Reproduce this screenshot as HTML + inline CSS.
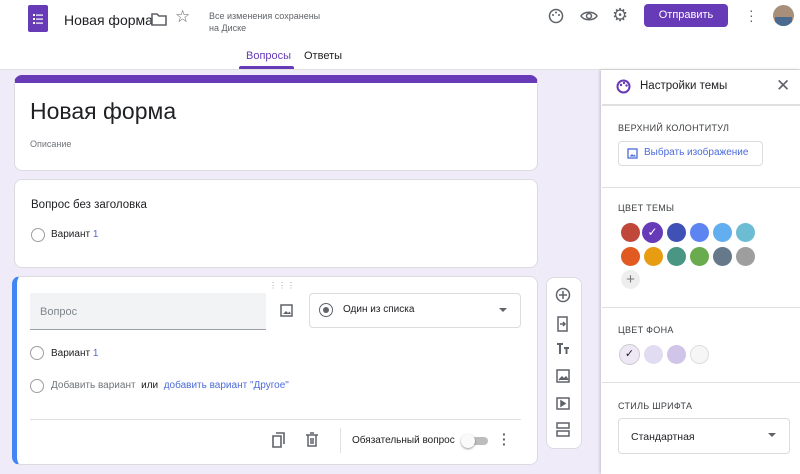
<!DOCTYPE html>
<html><head><meta charset="utf-8"><style>
*{box-sizing:border-box;margin:0;padding:0}
body{width:800px;height:474px;overflow:hidden;background:#f0ebf8;font-family:"Liberation Sans",sans-serif;position:relative;color:#202124}
.abs{position:absolute}
.hdr{left:0;top:0;width:800px;height:70px;background:#fff;border-bottom:1px solid #e0e0e0}
.card{background:#fff;border-radius:8px;border:1px solid #dadce0}
.radio{width:14px;height:14px;border:1.5px solid #9e9e9e;border-radius:50%}
.lbl{font-size:9px;color:#3c4043;letter-spacing:.3px}
.dot{width:19px;height:19px;border-radius:50%;position:absolute}
.div{left:602px;width:198px;height:1px;background:#e0e0e0}
</style></head><body>
<div class="abs hdr"></div>
<div class="abs" style="left:28px;top:5px;width:20px;height:27px;background:#673ab7;border-radius:2px"></div>
<svg class="abs" style="left:31px;top:12px" width="14" height="14"><g fill="#fff"><rect x="2" y="2" width="2" height="2"/><rect x="5" y="2.5" width="7" height="1.2"/><rect x="2" y="6" width="2" height="2"/><rect x="5" y="6.5" width="7" height="1.2"/><rect x="2" y="10" width="2" height="2"/><rect x="5" y="10.5" width="7" height="1.2"/></g></svg>
<div class="abs" style="left:64px;top:12px;font-size:14px">Новая форма</div>
<svg class="abs" style="left:151px;top:12px" width="16" height="14"><path d="M1 2h5l2 2h7v9H1z" fill="none" stroke="#5f6368" stroke-width="1.6"/></svg>
<div class="abs" style="left:175px;top:7px;font-size:17px;color:#5f6368">☆</div>
<div class="abs" style="left:209px;top:10px;font-size:9px;color:#5f6368;line-height:12px">Все изменения сохранены<br>на Диске</div>
<svg class="abs" style="left:548px;top:8px" width="16" height="16"><circle cx="8" cy="8" r="6.5" fill="none" stroke="#5f6368" stroke-width="1.5"/><circle cx="5" cy="7" r="1" fill="#5f6368"/><circle cx="8" cy="4.5" r="1" fill="#5f6368"/><circle cx="11" cy="7" r="1" fill="#5f6368"/></svg>
<svg class="abs" style="left:580px;top:9px" width="18" height="14"><path d="M1 7C4 2 14 2 17 7C14 12 4 12 1 7z" fill="none" stroke="#5f6368" stroke-width="1.5"/><circle cx="9" cy="7" r="2.5" fill="none" stroke="#5f6368" stroke-width="1.5"/></svg>
<div class="abs" style="left:612px;top:5px;font-size:18px;color:#5f6368">⚙</div>
<div class="abs" style="left:644px;top:4px;width:84px;height:23px;background:#673ab7;border-radius:4px;color:#fff;font-size:11px;text-align:center;line-height:23px">Отправить</div>
<div class="abs" style="left:749px;top:8px;font-size:14px;color:#5f6368;line-height:5px">·<br>·<br>·</div>
<div class="abs" style="left:773px;top:5px;width:21px;height:21px;border-radius:50%;background:#a88f7a;overflow:hidden"><div style="margin:12px 2px;width:17px;height:9px;background:#4a6a90"></div></div>
<div class="abs" style="left:246px;top:50px;font-size:11px;color:#673ab7">Вопросы</div>
<div class="abs" style="left:239px;top:66px;width:55px;height:3px;background:#673ab7;border-radius:2px 2px 0 0"></div>
<div class="abs" style="left:304px;top:50px;font-size:11px;color:#202124">Ответы</div>

<div class="abs card" style="left:14px;top:75px;width:524px;height:96px;border-top:8px solid #673ab7"></div>
<div class="abs" style="left:30px;top:98px;font-size:23px">Новая форма</div>
<div class="abs" style="left:30px;top:139px;font-size:9px;color:#70757a">Описание</div>

<div class="abs card" style="left:14px;top:179px;width:524px;height:89px"></div>
<div class="abs" style="left:31px;top:199px;font-size:11.5px">Вопрос без заголовка</div>
<div class="abs radio" style="left:31px;top:228px"></div>
<div class="abs" style="left:51px;top:229px;font-size:10px">Вариант <span style="color:#4c6bd8">1</span></div>

<div class="abs card" style="left:12px;top:276px;width:526px;height:189px;border-left:5px solid #4285f4"></div>
<div class="abs" style="left:269px;top:281px;font-size:8px;color:#9aa0a6;letter-spacing:1px">⋮⋮⋮</div>
<div class="abs" style="left:30px;top:293px;width:236px;height:37px;background:#f1f3f4;border-bottom:1px solid #9aa0a6;font-size:11px;color:#80868b;padding:13px 10px">Вопрос</div>
<svg class="abs" style="left:280px;top:304px" width="13" height="13"><rect x="1" y="1" width="11" height="11" fill="none" stroke="#5f6368" stroke-width="1.5"/><path d="M3 10l3-3 2 2 1.5-1.5L11 10z" fill="#5f6368"/></svg>
<div class="abs" style="left:309px;top:293px;width:212px;height:35px;border:1px solid #dadce0;border-radius:4px"></div>
<div class="abs" style="left:319px;top:303px;width:14px;height:14px;border:1.5px solid #5f6368;border-radius:50%"><div style="margin:2.5px;width:6px;height:6px;border-radius:50%;background:#5f6368"></div></div>
<div class="abs" style="left:343px;top:304px;font-size:10px">Один из списка</div>
<div class="abs" style="left:499px;top:308px;border:4px solid transparent;border-top:4px solid #5f6368"></div>
<div class="abs radio" style="left:30px;top:346px"></div>
<div class="abs" style="left:51px;top:348px;font-size:10px">Вариант <span style="color:#4c6bd8">1</span></div>
<div class="abs radio" style="left:30px;top:379px"></div>
<div class="abs" style="left:51px;top:380px;font-size:10px;color:#70757a">Добавить вариант <span style="color:#202124">&nbsp;или&nbsp;</span> <span style="color:#4c6bd8">добавить вариант "Другое"</span></div>
<div class="abs" style="left:30px;top:419px;width:491px;height:1px;background:#e0e0e0"></div>
<svg class="abs" style="left:272px;top:432px" width="16" height="16"><path d="M4 1h8v11M1 4h8v11H1z" fill="none" stroke="#5f6368" stroke-width="1.6"/></svg>
<svg class="abs" style="left:305px;top:432px" width="14" height="15"><path d="M1 3h12M5 1h4M3 3v11h8V3M6 6v6M8 6v6" fill="none" stroke="#5f6368" stroke-width="1.5"/></svg>
<div class="abs" style="left:340px;top:428px;width:1px;height:25px;background:#e0e0e0"></div>
<div class="abs" style="left:352px;top:435px;font-size:10px">Обязательный вопрос</div>
<div class="abs" style="left:464px;top:437px;width:24px;height:8px;background:#bdbdbd;border-radius:4px"></div>
<div class="abs" style="left:461px;top:434px;width:14px;height:14px;background:#fafafa;border-radius:50%;box-shadow:0 1px 2px rgba(0,0,0,.4)"></div>
<div class="abs" style="left:502px;top:432px;font-size:14px;color:#5f6368;line-height:5px;font-weight:bold">·<br>·<br>·</div>

<div class="abs card" style="left:546px;top:277px;width:36px;height:172px"></div>
<svg class="abs" style="left:555px;top:287px" width="16" height="168" fill="none" stroke="#5f6368" stroke-width="1.5">
<circle cx="8" cy="8" r="6.5"/><path d="M8 4v8M4 8h8"/>
<path d="M3 30h9l0 0v14H3z M5 37h5M8 35l2 2-2 2"/>
<path d="M2 57h6M5 57v10M9 61h5M11.5 61v6" stroke-width="2"/>
<rect x="2" y="83" width="12" height="12"/><path d="M4 93l3-3 2 2 2-2 2 3" fill="#5f6368"/>
<rect x="2" y="111" width="12" height="11"/><path d="M6 114v5l4-2.5z" fill="#5f6368"/>
<rect x="2" y="136" width="12" height="5"/><rect x="2" y="144" width="12" height="5"/>
</svg>

<div class="abs" style="left:601px;top:70px;width:199px;height:404px;background:#fff;box-shadow:-1px 0 3px rgba(0,0,0,.2)"></div>
<svg class="abs" style="left:616px;top:79px" width="15" height="15"><circle cx="7.5" cy="7.5" r="6" fill="none" stroke="#673ab7" stroke-width="2"/><circle cx="5" cy="6" r="1.2" fill="#673ab7"/><circle cx="8" cy="4" r="1.2" fill="#673ab7"/><circle cx="10.5" cy="6.5" r="1.2" fill="#673ab7"/></svg>
<div class="abs" style="left:640px;top:80px;font-size:11.5px">Настройки темы</div>
<div class="abs" style="left:776px;top:76px;font-size:17px;color:#5f6368">✕</div>
<div class="abs div" style="top:104px;height:2px"></div>
<div class="abs lbl" style="left:618px;top:123px">ВЕРХНИЙ КОЛОНТИТУЛ</div>
<div class="abs" style="left:618px;top:141px;width:145px;height:25px;border:1px solid #dadce0;border-radius:4px"></div>
<svg class="abs" style="left:627px;top:148px" width="11" height="11"><rect x="1" y="1" width="9" height="9" fill="none" stroke="#4c6bd8" stroke-width="1.3"/><path d="M2.5 8.5l2.5-2.5 1.5 1.5 1-1 1.5 2z" fill="#4c6bd8"/></svg>
<div class="abs" style="left:644px;top:147px;font-size:10px;color:#4c6bd8">Выбрать изображение</div>
<div class="abs div" style="top:187px"></div>
<div class="abs lbl" style="left:618px;top:203px">ЦВЕТ ТЕМЫ</div>
<div class="dot" style="left:621px;top:223px;background:#c0483a"></div>
<div class="dot" style="left:642px;top:222px;width:21px;height:21px;background:#673ab7;color:#fff;font-size:12px;text-align:center;line-height:21px">✓</div>
<div class="dot" style="left:667px;top:223px;background:#3f51b5"></div>
<div class="dot" style="left:690px;top:223px;background:#5c85f2"></div>
<div class="dot" style="left:713px;top:223px;background:#62aef0"></div>
<div class="dot" style="left:736px;top:223px;background:#6cbcd4"></div>
<div class="dot" style="left:621px;top:247px;background:#e05a22"></div>
<div class="dot" style="left:644px;top:247px;background:#e89c12"></div>
<div class="dot" style="left:667px;top:247px;background:#4a9685"></div>
<div class="dot" style="left:690px;top:247px;background:#6aab50"></div>
<div class="dot" style="left:713px;top:247px;background:#66798a"></div>
<div class="dot" style="left:736px;top:247px;background:#9e9e9e"></div>
<div class="dot" style="left:621px;top:270px;background:#eeeeee;color:#757575;font-size:15px;text-align:center;line-height:19px">+</div>
<div class="abs div" style="top:307px"></div>
<div class="abs lbl" style="left:618px;top:325px">ЦВЕТ ФОНА</div>
<div class="dot" style="left:619px;top:344px;width:21px;height:21px;background:#ede7f6;border:1px solid #ccc;font-size:11px;text-align:center;line-height:19px">✓</div>
<div class="dot" style="left:644px;top:345px;background:#e2dcf3"></div>
<div class="dot" style="left:667px;top:345px;background:#d1c4e9"></div>
<div class="dot" style="left:690px;top:345px;background:#f6f6f6;border:1px solid #ddd"></div>
<div class="abs div" style="top:382px"></div>
<div class="abs lbl" style="left:618px;top:401px">СТИЛЬ ШРИФТА</div>
<div class="abs" style="left:618px;top:418px;width:172px;height:36px;border:1px solid #dadce0;border-radius:4px;font-size:10.5px;padding:12px 12px">Стандартная</div>
<div class="abs" style="left:768px;top:433px;border:4px solid transparent;border-top:4px solid #5f6368"></div>
</body></html>
